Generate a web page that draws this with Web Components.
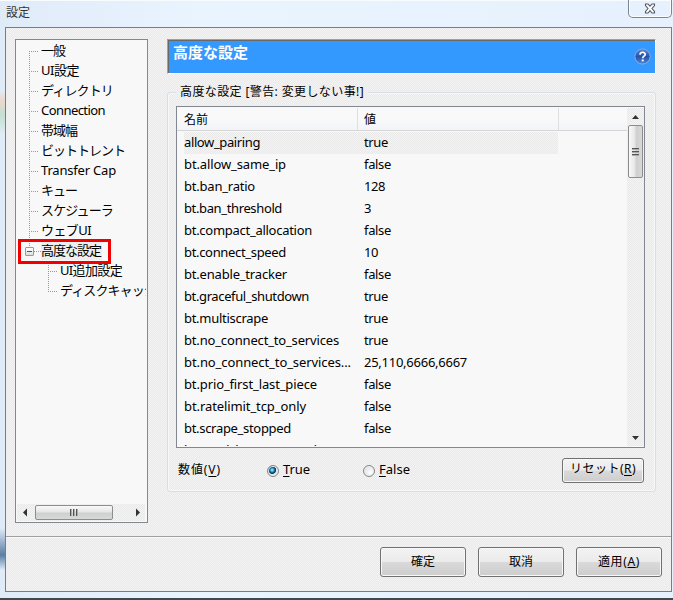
<!DOCTYPE html>
<html lang="ja"><head><meta charset="utf-8"><title>設定</title>
<style>
html,body{margin:0;height:600px;overflow:hidden}
body{font:13px/20px "Noto Sans","Noto Sans CJK JP",sans-serif;color:#000;
--tex:repeating-conic-gradient(#e9e9e9 0 25%,#f4f4f4 0 50%) 0 0/2px 2px}
</style></head><body>
<settings-window></settings-window>
<script>
const define=(name,html,setup)=>{
  const t=document.createElement('template');t.innerHTML=html;
  customElements.define(name,class extends HTMLElement{
    connectedCallback(){ if(this.shadowRoot)return;
      this.attachShadow({mode:'open'}).append(t.content.cloneNode(true)); setup&&setup(this,this.shadowRoot);}
  });
};
/* Text run tracked to a given width in px */
define('fit-text','<style>:host{display:inline-block;white-space:nowrap;text-align:left}span{display:inline-block}</style><span><slot></slot></span>',(h,r)=>{
  const w=+h.getAttribute('w'),s=r.querySelector('span'),n=[...h.textContent].length;
  s.style.letterSpacing=(w-s.getBoundingClientRect().width)/n+'px';
});
define('tree-item',`<style>
:host{display:block;height:20px;padding-left:25px;position:relative;line-height:18px;white-space:nowrap;
background:repeating-linear-gradient(90deg,#999 0 1px,transparent 1px 2px) 13px 10px/10px 1px no-repeat,
repeating-linear-gradient(#999 0 1px,transparent 1px 2px) 13px 0/1px 20px no-repeat}
:host([first]){background-size:10px 1px,1px 10px;background-position:13px 10px,13px 10px}
:host([child]){padding-left:44px;background-position:32px 10px,32px 0}
:host([last]){background-size:10px 1px,1px 11px}
:host([open]){background-size:7px 1px,1px 7px;background-position:18px 10px,13px 0}
i{display:none}:host([open]) i{display:block;position:absolute;left:9px;top:6px;width:7px;height:7px;border:1px solid #999;border-radius:1px;background:linear-gradient(#3c579c,#3c579c) 1px 3px/5px 1px no-repeat,linear-gradient(#fff,#ddd)}
:host([open]) span{background:#eee;padding:1px 1px 1px 0}
</style><i></i><span><slot></slot></span>`);
define('scroll-bar',`<style>
:host{display:flex;flex-direction:column;align-items:center;width:17px;background:var(--tex);box-sizing:border-box}
:host([h]){flex-direction:row;width:auto;height:17px}
svg{flex:none;width:17px;height:17px}
.t{box-sizing:border-box;width:15px;height:53px;margin-top:0;border:1px solid #8d8d8d;border-radius:2px;background:linear-gradient(90deg,#f9f9f9,#e6e6e6 45%,#cfcfcf 55%,#d8d8d8);display:flex;flex-direction:column;gap:1px;align-items:center;justify-content:center}
.t b{width:7px;height:2px;background:linear-gradient(#555 50%,#aaa 50%)}
:host([h]) .t{width:78px;height:15px;margin:0 0 0 1px;flex-direction:row;background:linear-gradient(#f9f9f9,#e6e6e6 45%,#cfcfcf 55%,#d8d8d8)}
:host([h]) .t b{width:2px;height:7px;background:linear-gradient(90deg,#555 50%,#aaa 50%)}
.g{flex:1}
</style><svg><path fill="#333"/></svg><div class="t"><b></b><b></b><b></b></div><div class="g"></div><svg><path fill="#333"/></svg>`,(h,r)=>{
  const p=r.querySelectorAll('path'),z=h.hasAttribute('h');
  p[0].setAttribute('d',z?'M10 4.5v8L6 8.5z':'M5 11h7L8.5 7z');
  p[1].setAttribute('d',z?'M8 4.5v8L12 8.5z':'M5 7h7L8.5 11z');
});
define('push-button',`<style>
:host{display:flex;box-sizing:border-box;width:86px;height:30px;border:1px solid #707070;border-radius:3px;box-shadow:inset 0 0 0 1px #f8f8f8;background:linear-gradient(#f3f3f3,#ebebeb 48%,#d9d9d9 52%,#cdcdcd);align-items:center;justify-content:center;font-size:12px}
:host([small]){width:82px;height:25px;padding-bottom:2px}
</style><slot></slot>`);
define('radio-option',`<style>
:host{display:flex;align-items:center;gap:4px}
i{box-sizing:border-box;width:12px;height:12px;margin-top:3px;border-radius:50%;border:1px solid #858585;background:radial-gradient(circle at 65% 65%,#fff,#d3d6d9);box-shadow:inset 0 0 0 1px #f2f2f2}
:host([on]) i{background:radial-gradient(circle at 42% 40%,#7fd3f3 0 1px,#1686ba 2px,#10324d 3.5px,#dfe5e8 4.3px)}
</style><i></i><slot></slot>`);
define('list-row',`<style>
:host{display:grid;box-sizing:border-box;grid-template-columns:180px 1fr;height:22px;line-height:20px;padding-left:7px}
:host([sel]){background:var(--tex);background-clip:content-box;width:381px}
</style><slot></slot>`);
define('settings-list',`<style>
:host{display:flex;box-sizing:border-box;width:469px;height:342px;border:1px solid #828790;background:#f8f8f8;padding:1px 0 1px 0;overflow:hidden}
.m{flex:1;height:338px;overflow:hidden}
header{display:flex;box-sizing:border-box;height:23px;margin-bottom:1px;border-bottom:1px solid #d5d5d5;background:linear-gradient(#f9f9f9 50%,#f1f4f8);font-size:12px;line-height:23px}
header span{box-sizing:border-box;width:181px;padding-left:7px;border-right:1px solid #dedfe1}
header span+span{width:201px;padding-left:6px}
</style><div class="m"><header><span>名前</span><span>値</span></header></div><scroll-bar></scroll-bar>`,(h,r)=>{
  const rows=[['allow_pairing',76,'true',24],['bt.allow_same_ip',102,'false',27],['bt.ban_ratio',71,'128',21],['bt.ban_threshold',98,'3',7],['bt.compact_allocation',128,'false',27],['bt.connect_speed',102,'10',14],['bt.enable_tracker',103,'false',27],['bt.graceful_shutdown',125,'true',24],['bt.multiscrape',84,'true',24],['bt.no_connect_to_services',155,'true',24],['bt.no_connect_to_services...',167,'25,110,6666,6667',103],['bt.prio_first_last_piece',133,'false',27],['bt.ratelimit_tcp_only',122,'false',27],['bt.scrape_stopped',107,'false',27],['bt.send_have_to_seed',133,'true',24]];
  r.querySelector('.m').insertAdjacentHTML('beforeend',rows.map((x,i)=>`<list-row${i?'':' sel'}><fit-text w="${x[1]}">${x[0]}</fit-text><fit-text w="${x[3]}">${x[2]}</fit-text></list-row>`).join(''));
});
define('tree-view',`<style>
:host{display:flex;flex-direction:column;box-sizing:border-box;width:133px;height:484px;border:1px solid #828790;background:#f8f8f8;padding:1px 1px 1px 0}
.l{flex:1;overflow:hidden;min-height:0}
scroll-bar{margin:0 1px 0 1px}
</style><div class="l">
<tree-item first><fit-text w="24">一般</fit-text></tree-item>
<tree-item><fit-text w="38">UI設定</fit-text></tree-item>
<tree-item><fit-text w="72">ディレクトリ</fit-text></tree-item>
<tree-item><fit-text w="64">Connection</fit-text></tree-item>
<tree-item><fit-text w="36">帯域幅</fit-text></tree-item>
<tree-item><fit-text w="84">ビットトレント</fit-text></tree-item>
<tree-item><fit-text w="75">Transfer Cap</fit-text></tree-item>
<tree-item><fit-text w="36">キュー</fit-text></tree-item>
<tree-item><fit-text w="72">スケジューラ</fit-text></tree-item>
<tree-item><fit-text w="50">ウェブUI</fit-text></tree-item>
<tree-item open><fit-text w="60">高度な設定</fit-text></tree-item>
<tree-item child><fit-text w="62">UI追加設定</fit-text></tree-item>
<tree-item child last><fit-text w="108">ディスクキャッシュ</fit-text></tree-item>
</div><scroll-bar h></scroll-bar>`);
define('page-banner',`<style>
:host{display:flex;box-sizing:border-box;justify-content:space-between;width:489px;height:35px;border:1px solid #a0a0a0;border-right-color:#fff;border-bottom-color:#fff;box-shadow:inset 1px 1px #696969;background:#39f;color:#fff;font-weight:700;font-size:15px;line-height:22px;padding:1px 4px 0 5px}
svg{margin-top:7px}
</style><slot></slot><svg width="17" height="17"><defs><linearGradient id="g" x2="0" y2="1"><stop stop-color="#5d8cdb"/><stop offset=".5" stop-color="#2453ad"/><stop offset="1" stop-color="#4f87d8"/></linearGradient></defs><circle cx="8.5" cy="8.5" r="7.6" fill="url(#g)" stroke="#8fa9d9" stroke-width="1"/><path d="M6 6.8C6 3.4 11.3 3.5 11.2 6.5C11.1 8.3 8.7 8.1 8.7 10.2" fill="none" stroke="#fff" stroke-width="1.7"/><rect x="7.7" y="11.4" width="2" height="2" fill="#fff"/></svg>`);
define('group-box',`<style>
:host{display:block;box-sizing:border-box;position:relative;width:489px;height:400px;margin-top:18px;border:1px solid #d5dfe5;border-radius:3px;box-shadow:inset 0 0 0 1px #f8f8f8;padding:13px 8px 0}
.cap{position:absolute;left:8px;top:-11px;padding:0 4px;background:var(--tex);font-size:12px;line-height:20px}
.r{display:flex;align-items:center;height:40px;padding:2px 3px 0 2px}
.r>fit-text{width:89px;margin-top:-2px}.r radio-option{width:96px;margin-top:-2px}push-button{margin-left:auto}
u{text-underline-offset:2px}
</style><div class="cap"><fit-text w="184">高度な設定 [警告: 変更しない事!]</fit-text></div>
<settings-list></settings-list>
<div class="r"><fit-text w="43"><span style="font-size:12px">数値(<u>V</u>)</span></fit-text>
<radio-option on><fit-text w="27"><u>T</u>rue</fit-text></radio-option><radio-option><fit-text w="31"><u>F</u>alse</fit-text></radio-option>
<push-button small><fit-text w="66">リセット(<u>R</u>)</fit-text></push-button></div>`);
define('settings-window',`<style>
:host{display:grid;grid-template-rows:27px 565px 1fr;box-sizing:border-box;width:673px;height:600px;overflow:hidden;border-bottom:2px solid #42484f;background:linear-gradient(transparent 28px,transparent 90px,#f7c49b77 100px,#a2d3a677 115px,transparent 135px,transparent 528px,#5c7ea4 555px,transparent 570px) 0 0/5px 100% no-repeat,linear-gradient(90deg,#e0ebf8,#eaf4ff 30%,#e6f1fd)}
.bar{display:flex;justify-content:space-between;font-size:12px;line-height:24px;padding-left:6px;color:#333;border-top:1px solid #f8fcff;box-sizing:border-box}
.x{box-sizing:border-box;width:44px;height:18px;margin:-1px 1px 0 0;border:1px solid #7b8490;border-top:0;border-radius:0 0 5px 5px;box-shadow:inset 0 0 0 1px #fafdff;display:flex;align-items:center;justify-content:center}
.client{box-sizing:border-box;width:667px;margin-left:5px;border:1px solid #747d88;background:var(--tex);display:flex;flex-direction:column}
.main{display:flex;gap:19px;height:508px;box-sizing:border-box;padding:11px 0 0 9px}
.foot{display:flex;justify-content:flex-end;gap:12px;flex:1;border-top:1px solid #a0a0a0;box-shadow:inset 0 1px #fafafa;padding:10px 9px 0}
</style><div class="bar"><span>設定</span><div class="x"><svg width="12" height="11"><path d="M1.5 1H4L6 3.2L8 1H10.5V2.5L8 5.5L10.5 8.5V10H8L6 7.7L4 10H1.5V8.5L4 5.5L1.5 2.5Z" fill="#fff" stroke="#555b65" stroke-width="1.1"/></svg></div></div>
<div class="client"><div class="main"><tree-view></tree-view><div><page-banner><fit-text w="75">高度な設定</fit-text></page-banner><group-box></group-box></div></div>
<div class="foot"><push-button>確定</push-button><push-button>取消</push-button><push-button><fit-text w="42">適用(<u>A</u>)</fit-text></push-button></div></div>
<callout-frame></callout-frame>`);
define('callout-frame',`<style>:host{position:absolute;left:18px;top:239px;box-sizing:border-box;width:93px;height:25px;border:3px solid #f00000}</style>`);
</script></body></html>
